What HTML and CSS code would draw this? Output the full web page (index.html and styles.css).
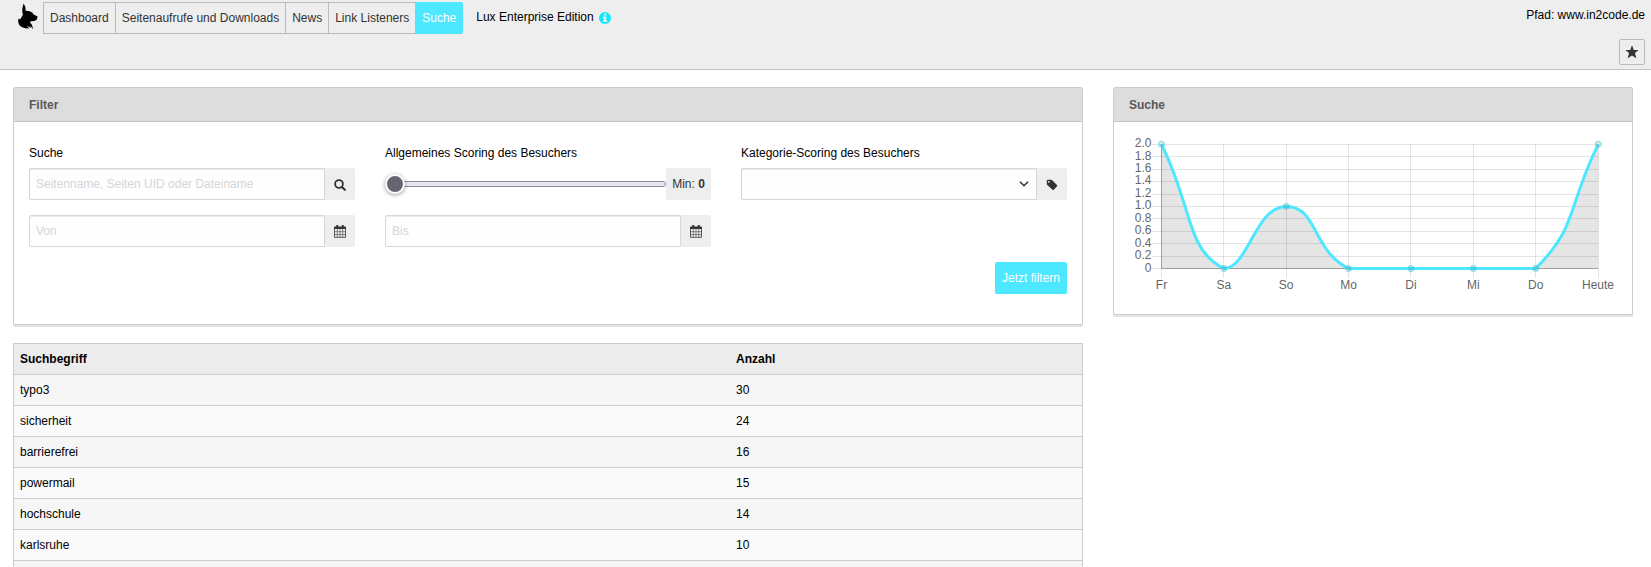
FILE: index.html
```html
<!DOCTYPE html>
<html lang="de">
<head>
<meta charset="utf-8">
<title>Lux – Suche</title>
<link rel="stylesheet" href="styles.css">
</head>
<body>
<header class="docheader">
  <div class="bar">
    <svg class="logo" width="20" height="28" viewBox="0 0 20 28"><path d="M5.6 0.6 L7.4 4 L7.6 7.800 Q11.500 7.400 14.500 9.800 L15.600 11.600 L19.6 13.4 L18.8 16.6 L16.5 18 L12.8 18.300 L12 19.200 L14 22 L15.200 26.600 L12.3 22.4 L13 25 L9 22.800 L11 25.400 Q4 25.5 1.3 22 Q-0.5 18.500 0.6 15.6 L2 16.500 Q4.800 13 5 11 L4.200 9.500 L4.4 5 Z"/></svg>
    <nav class="tabs">
      <a class="tab">Dashboard</a><a class="tab">Seitenaufrufe und Downloads</a><a class="tab">News</a><a class="tab">Link Listeners</a><a class="tab active">Suche</a>
    </nav>
    <span class="edition">Lux Enterprise Edition</span>
    <svg class="info" width="12" height="12" viewBox="0 0 12 12"><circle cx="6" cy="6" r="6" fill="#0feaff"/><path fill="#eee" d="M5 1.5h2.200v2H5zM4 4.4h3.200v3.800h1v1.700H4V8.200h1V6.100H4z"/></svg>
    <span class="path">Pfad: www.in2code.de</span>
  </div>
  <div class="bar actions">
    <a class="bookmark"><svg width="14" height="14" viewBox="0 0 14 14"><path fill="#333" d="M7 .3 8.800 4.900H13.600L9.900 8l1.500 5.300L7 10.400 2.600 13.300 4.100 8 .4 4.900h4.800z"/></svg></a>
  </div>
</header>
<main class="content">
  <div class="left">
    <section class="panel filter">
      <h2 class="panel-head">Filter</h2>
      <div class="fields">
        <label class="label">Suche</label>
        <label class="label">Allgemeines Scoring des Besuchers</label>
        <label class="label">Kategorie-Scoring des Besuchers</label>
        <div class="group">
          <div class="input">Seitenname, Seiten UID oder Dateiname</div>
          <div class="addon"><svg class="glyph" width="12" height="12" viewBox="0 0 12 12" fill="none" stroke="#333"><circle cx="5" cy="5" r="3.900" stroke-width="1.800"/><path d="M8 8l2.800 2.800" stroke-width="2.100" stroke-linecap="round"/></svg></div>
        </div>
        <div class="group">
          <div class="slider"><span class="thumb"></span></div>
          <div class="addon min">Min:&nbsp;<b>0</b></div>
        </div>
        <div class="group">
          <div class="input select"><svg width="10" height="6" viewBox="0 0 10 6" fill="none" stroke="#333" stroke-width="1.500"><path d="M1 .8l4 4 4-4"/></svg></div>
          <div class="addon"><svg class="glyph" width="12" height="12" viewBox="0 0 12 12"><path fill="#333" fill-rule="evenodd" d="M.8 1.800q0-1 1-1h3.400q.6 0 1 .4L11 6q.7.600 0 1.300L7.800 10.800q-.6.600-1.300 0L1.300 6Q.8 5.600 .8 5zM2.800 1.900a.9.900 0 100 1.800.9.900 0 000-1.800z"/></svg></div>
        </div>
        <div class="group second">
          <div class="input">Von</div>
          <div class="addon"><svg class="glyph" width="12" height="13" viewBox="0 0 12 13"><use href="#calendar"/></svg></div>
        </div>
        <div class="group second">
          <div class="input">Bis</div>
          <div class="addon"><svg class="glyph" width="12" height="13" viewBox="0 0 12 13"><use href="#calendar"/></svg></div>
        </div>
      </div>
      <div class="submit"><a class="button">Jetzt filtern</a></div>
    </section>
    <table class="terms">
      <thead><tr><th class="term">Suchbegriff</th><th>Anzahl</th></tr></thead>
      <tbody>
        <tr><td>typo3</td><td>30</td></tr>
        <tr><td>sicherheit</td><td>24</td></tr>
        <tr><td>barrierefrei</td><td>16</td></tr>
        <tr><td>powermail</td><td>15</td></tr>
        <tr><td>hochschule</td><td>14</td></tr>
        <tr><td>karlsruhe</td><td>10</td></tr>
        <tr><td>&nbsp;</td><td></td></tr>
      </tbody>
    </table>
  </div>
  <section class="panel chart">
    <h2 class="panel-head">Suche</h2>
    <svg class="plot" width="489" height="162" viewBox="0 0 489 162">
      <path class="area" d="M32.500 7.300C63.700 69.400 56.700 112.900 94.900 131.500C119.100 131.500 126.100 69.400 157.300 69.400C188.500 69.400 183 113.300 219.500 131.500L406.700 131.500C449.800 88.600 438.100 69.400 469.300 7.300V131.500H32.500Z"/>
      <path class="grid" d="M23 7.500H469M23 19.500H469M23 32.500H469M23 44.500H469M23 57.500H469M23 69.500H469M23 81.500H469M23 94.500H469M23 106.500H469M23 119.500H469M23 131.500H469M32.500 7V141M94.500 7V141M157.500 7V141M219.500 7V141M281.500 7V141M344.500 7V141M406.500 7V141M469.500 7V141"/>
      <path class="axis" d="M32.500 7V131.500H469"/>
      <path class="line" d="M32.500 7.300C63.700 69.400 56.700 112.900 94.900 131.500C119.100 131.500 126.100 69.400 157.300 69.400C188.500 69.400 183 113.300 219.500 131.500L406.700 131.500C449.800 88.600 438.100 69.400 469.300 7.300"/>
      <g class="points"><circle cx="32.500" cy="7.300" r="3"/><circle cx="94.900" cy="131.500" r="3"/><circle cx="157.300" cy="69.400" r="3"/><circle cx="219.500" cy="131.500" r="3"/><circle cx="282" cy="131.500" r="3"/><circle cx="344.400" cy="131.500" r="3"/><circle cx="406.700" cy="131.500" r="3"/><circle cx="469.300" cy="7.300" r="3"/></g>
      <g class="ylabels"><text x="22.500" y="10">2.0</text><text x="22.500" y="22.500">1.8</text><text x="22.500" y="35">1.6</text><text x="22.500" y="47">1.4</text><text x="22.500" y="60">1.2</text><text x="22.500" y="72">1.0</text><text x="22.500" y="85">0.8</text><text x="22.500" y="97">0.6</text><text x="22.500" y="110">0.4</text><text x="22.500" y="122">0.2</text><text x="22.500" y="135">0</text></g>
      <g class="xlabels"><text x="32.500" y="152">Fr</text><text x="94.900" y="152">Sa</text><text x="157" y="152">So</text><text x="219.500" y="152">Mo</text><text x="282" y="152">Di</text><text x="344.400" y="152">Mi</text><text x="406.700" y="152">Do</text><text x="469" y="152">Heute</text></g>
    </svg>
  </section>
</main>
<svg class="defs" width="0" height="0"><defs><g id="calendar"><path fill="#333" d="M0 2.500Q0 1.500 1 1.500H11Q12 1.500 12 2.500V4H0zM2.300 0h1.900v3H2.300zM7.800 0h1.900v3H7.800z"/><path fill="none" stroke="#444" stroke-width=".9" d="M.5 3.500V12.300H11.500V3.500"/><path fill="none" stroke="#444" stroke-width=".6" d="M3.300 4V12M6 4V12M8.700 4V12M.5 6.700H11.500M.5 9.500H11.500"/></g></defs></svg>
</body>
</html>
```
FILE: styles.css
```css
* { box-sizing: border-box; }
html, body { height: 100%; overflow: hidden; }
body { margin: 0; background: #fff; color: #000; font: 12px/18px "Liberation Sans", Arial, sans-serif; }
svg { display: block; flex: none; }

.docheader { height: 70px; padding: 2px 6px 0 18px; background: #eee; border-bottom: 1px solid #c3c3c3; }
.bar { display: flex; align-items: flex-start; height: 37px; }
.logo { margin-top: 1px; }
.tabs { display: flex; margin-left: 5px; }
.tab { height: 32px; margin-right: -1px; padding: 6px; border: 1px solid #bbb; color: #333; }
.tab.active { position: relative; border-color: #4de7ff; border-radius: 0 2px 2px 0; background: #4de7ff; color: #fff; }
.edition { margin: 6px 5px 0 14px; }
.info { margin-top: 10px; }
.path { margin-left: auto; margin-top: 4px; }
.actions { justify-content: flex-end; }
.bookmark { display: grid; place-items: center; width: 26px; height: 26px; border: 1px solid #bbb; border-radius: 2px; }

.content { display: flex; align-items: flex-start; gap: 30px; padding: 17px 18px 0 13px; }
.left { width: 1070px; }
.panel { border: 1px solid #ccc; border-radius: 2px; background: #fff; box-shadow: 0 2px 0 #e3e3e3; }
.panel-head { height: 34px; margin: 0; padding: 8px 15px; border-bottom: 1px solid #c3c3c3; background: #ddd; color: #595959; font-size: 12px; line-height: 18px; }
.filter { height: 238px; }
.chart { width: 520px; height: 228px; }
.plot { margin: 15px; }

.fields { display: grid; grid-template-columns: repeat(3, 326px); column-gap: 30px; padding: 22px 15px 0; }
.label { height: 24px; }
.group { display: flex; height: 32px; }
.second { margin-top: 15px; }
.input { flex: 1; padding: 6px; border: 1px solid #d7d7d7; border-radius: 2px 0 0 2px; background: #fefefe; box-shadow: inset 0 1px 1px rgba(0,0,0,.075); color: #d5d5d5; }
.select { display: flex; align-items: center; justify-content: flex-end; padding-right: 7px; }
.addon { display: flex; align-items: center; justify-content: center; width: 30px; border-radius: 0 2px 2px 0; background: #eee; color: #333; }
.glyph { margin-top: 1px; }
.min { width: 45px; }
.slider { display: flex; align-items: center; flex: 1; height: 6px; margin-top: 13px; border: 1px solid #8f8ba0; border-radius: 3px; background: #e9e6ee; }
.thumb { width: 20px; height: 20px; margin-left: -1px; border: 2px solid #fff; border-radius: 50%; background: #666573; box-shadow: 0 1px 4px rgba(0,0,0,.4); }
.submit { display: flex; justify-content: flex-end; padding: 15px 15px 0; }
.button { height: 32px; padding: 7px; border-radius: 2px; background: #4de7ff; color: #fff; }

.terms { width: 1070px; margin-top: 18px; border: 1px solid #ccc; border-collapse: collapse; table-layout: fixed; }
.terms th, .terms td { height: 31px; padding: 0 6px; border-bottom: 1px solid #ccc; text-align: left; }
.terms th { background: #ececec; }
.terms .term { width: 716.5px; }
.terms tbody tr { background: #fafafa; }
.terms tbody tr:nth-child(odd) { background: #f6f6f6; }

.area { fill: rgba(0,0,0,.1); }
.grid { fill: none; stroke: rgba(0,0,0,.1); }
.axis { fill: none; stroke: rgba(0,0,0,.27); }
.line { fill: none; stroke: #4de7ff; stroke-width: 3; }
.points { fill: rgba(0,0,0,.1); stroke: #4dd5ea; stroke-opacity: .8; }
.plot text { fill: #666; font-size: 12px; }
.ylabels { text-anchor: end; }
.xlabels { text-anchor: middle; }
.defs { position: absolute; }
```
